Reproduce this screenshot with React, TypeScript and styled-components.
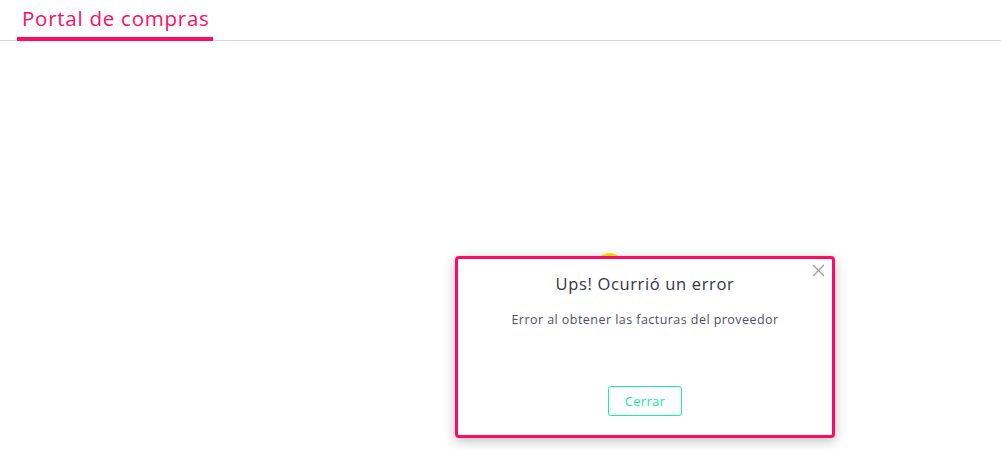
import styled, { createGlobalStyle } from 'styled-components';

const GlobalStyle = createGlobalStyle`
  html, body {
    margin: 0;
    padding: 0;
    background: #fff;
    font-family: 'Open Sans', 'Noto Sans', sans-serif;
  }
  * {
    box-sizing: border-box;
  }
`;

const Page = styled.div`
  width: 1001px;
  height: 449px;
  position: relative;
  overflow: hidden;
`;

const TabBar = styled.div`
  display: flex;
  align-items: flex-end;
  padding-left: 17px;
  border-bottom: 1px solid #d4d4d4;
  height: 41px;
`;

const Tab = styled.div`
  padding: 0 4px 0 5px;
  width: 196px;
  height: 40px;
  border-bottom: 4px solid #ff0a66;
  margin-bottom: -1px;
  color: #ff0a66;
  font-size: 20.5px;
  line-height: 34px;
  letter-spacing: 0.75px;
  white-space: nowrap;
`;

const Content = styled.div`
  display: flex;
  justify-content: center;
  padding: 215px 0 0 289px;
  position: relative;
`;

const Spinner = styled.div`
  position: absolute;
  left: 595px;
  top: 212px;
  width: 30px;
  height: 30px;
  border-radius: 50%;
  border: 4px solid #f7e600;
  border-right-color: transparent;
  border-bottom-color: transparent;
  transform: rotate(25deg);
`;

const Modal = styled.div`
  position: relative;
  width: 380px;
  height: 182px;
  border: 3px solid #ff0a66;
  border-radius: 4px;
  background: #fff;
  box-shadow: 0 3px 12px rgba(0, 0, 0, 0.25);
  display: flex;
  flex-direction: column;
  align-items: center;
  padding-top: 14px;
  color: #3b3b4f;
`;

const CloseButton = styled.button`
  position: absolute;
  top: 3px;
  right: 6px;
  width: 16px;
  height: 16px;
  padding: 0;
  border: none;
  background: none;
  cursor: pointer;
  display: flex;
  align-items: center;
  justify-content: center;
`;

const Title = styled.h2`
  margin: 0;
  font-size: 16.5px;
  font-weight: 400;
  line-height: 22px;
  letter-spacing: 0.65px;
  color: #33334a;
`;

const Message = styled.p`
  margin: 16px 0 0;
  font-size: 12.5px;
  line-height: 18px;
  letter-spacing: 0.45px;
  color: #4e4e62;
`;

const Actions = styled.div`
  margin-top: auto;
  margin-bottom: 19px;
`;

const OutlineButton = styled.button`
  width: 74px;
  height: 30px;
  border: 1px solid #14f0a8;
  border-radius: 3px;
  background: #fff;
  color: #14e8a2;
  font-family: inherit;
  font-size: 13px;
  letter-spacing: 0.3px;
  cursor: pointer;
`;

export default function App() {
  return (
    <Page>
      <GlobalStyle />
      <TabBar>
        <Tab>Portal de compras</Tab>
      </TabBar>
      <Content>
        <Spinner />
        <Modal>
          <CloseButton aria-label="Cerrar">
            <svg width="13" height="13" viewBox="0 0 13 13">
              <path d="M1 1 L12 12 M12 1 L1 12" stroke="#a0a0a8" strokeWidth="1.4" />
            </svg>
          </CloseButton>
          <Title>Ups! Ocurrió un error</Title>
          <Message>Error al obtener las facturas del proveedor</Message>
          <Actions>
            <OutlineButton>Cerrar</OutlineButton>
          </Actions>
        </Modal>
      </Content>
    </Page>
  );
}
